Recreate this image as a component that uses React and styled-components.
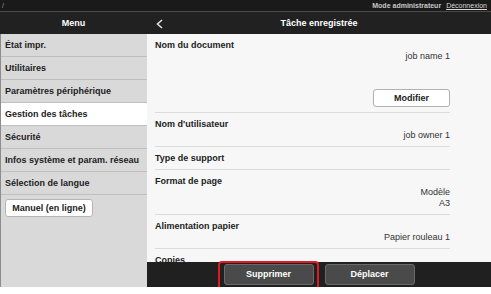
import styled, { createGlobalStyle } from "styled-components";

const GlobalStyle = createGlobalStyle`
  html, body {
    margin: 0;
    padding: 0;
    background: #ffffff;
  }
  body {
    font-family: "Liberation Sans", Arial, sans-serif;
  }
`;

const menuItems = [
  "État impr.",
  "Utilitaires",
  "Paramètres périphérique",
  "Gestion des tâches",
  "Sécurité",
  "Infos système et param. réseau",
  "Sélection de langue",
];

const fields = [
  { label: "Nom du document", values: ["job name 1"], action: "Modifier" },
  { label: "Nom d'utilisateur", values: ["job owner 1"] },
  { label: "Type de support", values: [] },
  { label: "Format de page", values: ["Modèle", "A3"] },
  { label: "Alimentation papier", values: ["Papier rouleau 1"] },
  { label: "Copies", values: [] },
];

export default function App() {
  return (
    <>
      <GlobalStyle />
      <Screen>
        <TopBar>
          <Path>/</Path>
          <TopLinks>
            <Mode>Mode administrateur</Mode>
            <Logout href="#">Déconnexion</Logout>
          </TopLinks>
        </TopBar>
        <Header>
          <MenuTitle>Menu</MenuTitle>
          <PageTitle>
            <Back>
              <svg width="7" height="10" viewBox="0 0 7 10">
                <polyline
                  points="6,1 1.5,5 6,9"
                  fill="none"
                  stroke="#e0e0e0"
                  strokeWidth="1.6"
                />
              </svg>
            </Back>
            <TitleText>Tâche enregistrée</TitleText>
          </PageTitle>
        </Header>
        <Body>
          <Sidebar>
            {menuItems.map((item) => (
              <MenuItem key={item} $active={item === "Gestion des tâches"}>
                {item}
              </MenuItem>
            ))}
            <ManualButton>Manuel (en ligne)</ManualButton>
          </Sidebar>
          <Main>
            <Content>
              {fields.map((f) => (
                <Row key={f.label}>
                  <Label>{f.label}</Label>
                  {f.values.map((v) => (
                    <Value key={v}>{v}</Value>
                  ))}
                  {f.action && (
                    <RowAction>
                      <EditButton>{f.action}</EditButton>
                    </RowAction>
                  )}
                </Row>
              ))}
            </Content>
            <BottomBar>
              <ActionButton>
                Supprimer
                <Highlight />
              </ActionButton>
              <ActionButton>Déplacer</ActionButton>
            </BottomBar>
          </Main>
        </Body>
      </Screen>
    </>
  );
}

const Screen = styled.div`
  width: 491px;
  height: 287px;
  display: flex;
  flex-direction: column;
`;

const TopBar = styled.div`
  height: 11px;
  background: #1a1a1a;
  border-bottom: 1px solid #4a4a4a;
  display: flex;
  align-items: center;
  justify-content: space-between;
  padding: 0 4px 0 2px;
  font-size: 7px;
  line-height: 11px;
`;

const Path = styled.span`
  color: #9a9a9a;
`;

const TopLinks = styled.div`
  display: flex;
  gap: 5px;
`;

const Mode = styled.span`
  color: #c8c8c8;
  font-weight: bold;
`;

const Logout = styled.a`
  color: #d8d8d8;
  text-decoration: underline;
`;

const Header = styled.div`
  height: 22px;
  background: #212121;
  display: flex;
  color: #ffffff;
  font-size: 9px;
  font-weight: bold;
`;

const MenuTitle = styled.div`
  width: 147px;
  display: flex;
  align-items: center;
  justify-content: center;
`;

const PageTitle = styled.div`
  flex: 1;
  display: grid;
  grid-template-columns: 16px 1fr 16px;
  align-items: center;
`;

const Back = styled.div`
  display: flex;
  justify-content: flex-end;
  padding-top: 1px;
`;

const TitleText = styled.div`
  text-align: center;
`;

const Body = styled.div`
  flex: 1;
  display: flex;
  min-height: 0;
`;

const Sidebar = styled.div`
  width: 146px;
  background: #d9d9d9;
  border-left: 1px solid #8c8c8c;
  display: flex;
  flex-direction: column;
`;

const MenuItem = styled.div`
  height: 22px;
  line-height: 22px;
  padding-left: 4px;
  font-size: 9px;
  font-weight: bold;
  color: #222;
  white-space: nowrap;
  background: ${(p) => (p.$active ? "#ffffff" : "transparent")};
  border-bottom: 1px solid #bfbfbf;
`;

const ManualButton = styled.div`
  align-self: flex-start;
  margin: 4px 0 0 4px;
  width: 86px;
  height: 16px;
  line-height: 16px;
  text-align: center;
  background: #ffffff;
  border: 1px solid #b5b5b5;
  border-radius: 3px;
  font-size: 9px;
  font-weight: bold;
  color: #222;
`;

const Main = styled.div`
  flex: 1;
  display: flex;
  flex-direction: column;
  min-width: 0;
  background: #f7f7f7;
`;

const Content = styled.div`
  flex: 1;
  overflow: hidden;
  padding: 0 41px 0 8px;
`;

const Row = styled.div`
  padding: 6px 0 5px;
  border-bottom: 1px solid #dcdcdc;
  font-size: 9px;
  line-height: 11px;
`;

const Label = styled.div`
  font-weight: bold;
  color: #222;
`;

const Value = styled.div`
  text-align: right;
  color: #333;
`;

const RowAction = styled.div`
  display: flex;
  justify-content: flex-end;
  margin-top: 27px;
`;

const EditButton = styled.div`
  width: 75px;
  height: 16px;
  line-height: 16px;
  text-align: center;
  background: #ffffff;
  border: 1px solid #b0b0b0;
  border-radius: 3px;
  font-weight: bold;
  color: #222;
`;

const BottomBar = styled.div`
  height: 25px;
  background: #202020;
  display: flex;
  align-items: center;
  justify-content: center;
  gap: 11px;
`;

const ActionButton = styled.div`
  position: relative;
  width: 88px;
  height: 19px;
  line-height: 19px;
  text-align: center;
  background: #4a4a4a;
  border: 1px solid #6a6a6a;
  border-radius: 3px;
  color: #ffffff;
  font-size: 9px;
  font-weight: bold;
`;

const Highlight = styled.span`
  position: absolute;
  top: -4px;
  left: -7px;
  right: -6px;
  bottom: -9px;
  border: 2px solid #e01a1f;
  border-radius: 4px;
  pointer-events: none;
`;
